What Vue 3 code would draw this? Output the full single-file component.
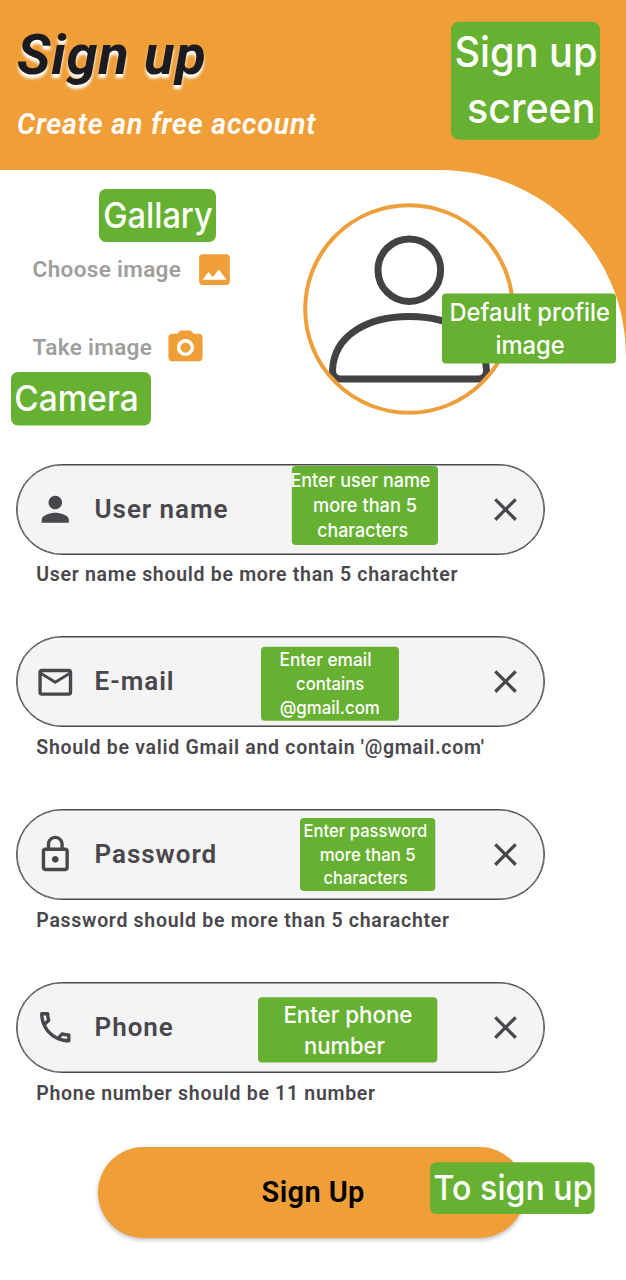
<script setup>
const icons = {
  person: 'M12 12c2.21 0 4-1.79 4-4s-1.79-4-4-4-4 1.79-4 4 1.79 4 4 4zm0 2c-2.67 0-8 1.34-8 4v2h16v-2c0-2.66-5.33-4-8-4z',
  mail: 'M22 6c0-1.1-.9-2-2-2H4c-1.1 0-2 .9-2 2v12c0 1.1.9 2 2 2h16c1.1 0 2-.9 2-2V6zm-2 0-8 5-8-5h16zm0 12H4V8l8 5 8-5v10z',
  lock: 'M18 8h-1V6c0-2.76-2.24-5-5-5S7 3.24 7 6v2H6c-1.1 0-2 .9-2 2v10c0 1.1.9 2 2 2h12c1.1 0 2-.9 2-2V10c0-1.1-.9-2-2-2zM9 6c0-1.66 1.34-3 3-3s3 1.34 3 3v2H9V6zm9 14H6V10h12v10zm-6-3c1.1 0 2-.9 2-2s-.9-2-2-2-2 .9-2 2 .9 2 2 2z',
  phone: 'M6.54 5c.06.89.21 1.76.45 2.59l-1.2 1.2c-.41-1.2-.67-2.47-.76-3.79h1.51m9.86 12.02c.85.24 1.72.39 2.6.45v1.49c-1.32-.09-2.59-.35-3.8-.75l1.2-1.19M7.5 3H4c-.55 0-1 .45-1 1 0 9.39 7.61 17 17 17 .55 0 1-.45 1-1v-3.49c0-.55-.45-1-1-1-1.24 0-2.45-.2-3.57-.57-.1-.04-.21-.05-.31-.05-.26 0-.51.1-.71.29l-2.2 2.2c-2.83-1.45-5.15-3.76-6.59-6.59l2.2-2.2c.28-.28.36-.67.25-1.02C8.7 6.45 8.5 5.25 8.5 4c0-.55-.45-1-1-1z',
}

const fields = [
  { label: 'User name', icon: 'person', helper: 'User name should be more than 5 charachter' },
  { label: 'E-mail', icon: 'mail', helper: "Should be valid Gmail and contain '@gmail.com'" },
  { label: 'Password', icon: 'lock', helper: 'Password should be more than 5 charachter' },
  { label: 'Phone', icon: 'phone', helper: 'Phone number should be 11 number' },
]

// Annotation labels floating over the screen. Each line: [text, x, baseline, width]
const notes = [
  { x: 451, y: 21.7, w: 149, h: 118, r: 8, size: 42, lines: [['Sign up', 454.5, 67, 143], ['screen', 467, 122.5, 128.5]] },
  { x: 99, y: 189, w: 117, h: 53, r: 7, size: 35.5, lines: [['Gallary', 103.2, 227.5, 109.5]] },
  { x: 11, y: 372, w: 140, h: 53.5, r: 7, size: 35.5, lines: [['Camera', 14.2, 410.5, 124.5]] },
  { x: 442, y: 293.5, w: 174, h: 70, r: 4, size: 24.5, lines: [['Default profile', 449.4, 320.5, 160.5], ['image', 495.4, 353.7, 69.3]] },
  { x: 291.8, y: 466, w: 146.2, h: 79, r: 4, size: 18.5, lines: [['Enter user name', 290.4, 487, 140], ['more than 5', 313, 512, 104], ['characters', 317.2, 537.3, 91]] },
  { x: 261, y: 646.7, w: 138, h: 74, r: 4, size: 18, lines: [['Enter email', 279.5, 666.3, 92], ['contains', 296, 690.3, 68.2], ['@gmail.com', 279.8, 713.9, 100]] },
  { x: 300, y: 818, w: 135.3, h: 73, r: 4, size: 17.5, lines: [['Enter password', 303.6, 837, 123.8], ['more than 5', 319.7, 860.7, 96], ['characters', 323.6, 883.8, 84]] },
  { x: 258, y: 997.3, w: 179.3, h: 65.2, r: 4, size: 23.3, lines: [['Enter phone', 283.4, 1022.5, 129], ['number', 304, 1053.7, 81]] },
  { x: 430, y: 1162.3, w: 164.6, h: 51.7, r: 6, size: 34.5, lines: [['To sign up', 433.6, 1200, 159]] },
]
</script>

<template>
  <div class="screen">
    <header class="header">
      <h1 class="title">Sign up</h1>
      <p class="subtitle">Create an free account</p>
    </header>

    <main class="sheet">
      <section class="profile">
        <div class="pickers">
          <div class="picker">
            <span>Choose image</span>
            <svg class="picker-icon gallery" viewBox="0 0 24 24">
              <path d="M21 19V5c0-1.1-.9-2-2-2H5c-1.1 0-2 .9-2 2v14c0 1.1.9 2 2 2h14c1.1 0 2-.9 2-2zM8.5 13.5l2.5 3.01L14.5 12l4.5 6H5l3.5-4.5z" />
            </svg>
          </div>
          <div class="picker">
            <span>Take image</span>
            <svg class="picker-icon camera" viewBox="0 0 24 24">
              <circle cx="12" cy="12" r="3" />
              <path d="M9 2 7.17 4H4c-1.1 0-2 .9-2 2v12c0 1.1.9 2 2 2h16c1.1 0 2-.9 2-2V6c0-1.1-.9-2-2-2h-3.17L15 2H9zm3 15c-2.76 0-5-2.24-5-5s2.24-5 5-5 5 2.24 5 5-2.24 5-5 5z" />
            </svg>
          </div>
        </div>
        <svg class="avatar" viewBox="0 0 212 212">
          <defs>
            <clipPath id="avatar-clip"><circle cx="106" cy="106" r="104" /></clipPath>
          </defs>
          <g class="figure" clip-path="url(#avatar-clip)">
            <circle cx="106.3" cy="67.2" r="31.3" />
            <path d="M29.5 167.2C31 132 65 113.500 106.300 113.500S182 132 183.500 167.200Q183.500 176 175 176H38Q29.500 176 29.500 167.200Z" />
          </g>
          <circle class="ring" cx="106" cy="106" r="103.8" />
        </svg>
      </section>

      <form class="form" @submit.prevent>
        <div v-for="f in fields" :key="f.label" class="field">
          <div class="input">
            <svg class="lead" viewBox="0 0 24 24"><path :d="icons[f.icon]" /></svg>
            <span class="label">{{ f.label }}</span>
            <svg class="clear" viewBox="0 0 24 24">
              <path d="M19 6.41 17.59 5 12 10.59 6.41 5 5 6.41 10.59 12 5 17.59 6.41 19 12 13.41 17.59 19 19 17.59 13.41 12z" />
            </svg>
          </div>
          <p class="helper">{{ f.helper }}</p>
        </div>
        <button class="submit" type="submit">Sign Up</button>
      </form>
    </main>

    <svg class="notes" viewBox="0 0 626 1280">
      <g v-for="(n, i) in notes" :key="i">
        <rect :x="n.x" :y="n.y" :width="n.w" :height="n.h" :rx="n.r" />
        <text
          v-for="l in n.lines"
          :key="l[0]"
          :x="l[1]"
          :y="l[2]"
          :font-size="n.size"
          :textLength="l[3]"
          lengthAdjust="spacingAndGlyphs"
        >{{ l[0] }}</text>
      </g>
    </svg>
  </div>
</template>

<style>
body {
  margin: 0;
}
</style>

<style scoped>
.screen {
  position: relative;
  width: 626px;
  height: 1280px;
  overflow: hidden;
  background: #f09f38;
  font-family: Roboto, "Liberation Sans", sans-serif;
}
.header {
  box-sizing: border-box;
  height: 170px;
  padding: 22px 17px 0;
}
.title {
  margin: 0;
  font-size: 56px;
  line-height: 66px;
  font-weight: 700;
  font-style: italic;
  letter-spacing: 0.8px;
  color: #1c1b1f;
  text-shadow: 0 4px 3px #fff;
}
.subtitle {
  margin: 20px 0 0;
  font-size: 28.5px;
  line-height: 34px;
  font-weight: 600;
  font-style: italic;
  letter-spacing: 0.8px;
  color: #fff;
}
.sheet {
  height: 1110px;
  background: #fff;
  border-top-right-radius: 186px;
}
.profile {
  display: flex;
  box-sizing: border-box;
  height: 293.5px;
  padding: 32.7px 0 0 32.6px;
}
.pickers {
  display: flex;
  flex-direction: column;
  gap: 37px;
  width: 270.6px;
  padding-top: 46px;
}
.picker {
  display: flex;
  align-items: center;
  height: 41px;
  font-size: 22.5px;
  font-weight: 600;
  letter-spacing: 0.35px;
  color: #9e9e9e;
}
.picker-icon {
  width: 41px;
  height: 41px;
  fill: #f09f38;
}
.gallery {
  margin-left: 12.7px;
}
.camera {
  margin-left: 12.7px;
}
.avatar {
  width: 212px;
  height: 212px;
}
.figure {
  fill: none;
  stroke: #424143;
  stroke-width: 7;
}
.ring {
  fill: none;
  stroke: #ed9f3b;
  stroke-width: 4;
}
.form {
  display: flex;
  flex-direction: column;
  padding-left: 16.3px;
}
.field {
  height: 172.9px;
}
.input {
  display: flex;
  align-items: center;
  box-sizing: border-box;
  width: 528.5px;
  height: 91px;
  padding: 0 19px 0 17.5px;
  border: 1px solid #49474c;
  border-radius: 46px;
  background: #f4f4f4;
  box-shadow: inset 0 0 0 0.6px #49474c;
}
.lead {
  width: 40.6px;
  height: 40.6px;
  fill: #49474c;
}
.label {
  flex: 1;
  margin: -1px 0 0 19.2px;
  font-size: 26px;
  line-height: 32px;
  font-weight: 600;
  letter-spacing: 0.95px;
  color: #49474c;
}
.clear {
  width: 39px;
  height: 39px;
  fill: #49474c;
}
.helper {
  margin: 8.4px 0 0 20px;
  font-size: 19.5px;
  line-height: 24px;
  font-weight: 600;
  letter-spacing: 0.7px;
  color: #49474c;
}
.submit {
  width: 427px;
  height: 91px;
  margin: -8.2px 0 0 81.9px;
  padding: 0 0 0 3px;
  border: 0;
  border-radius: 46px;
  background: #f09f38;
  box-shadow: 0 2px 4px rgba(0, 0, 0, 0.25);
  font: 600 29px/34px Roboto, "Liberation Sans", sans-serif;
  letter-spacing: 0.4px;
  color: #000;
}
.notes {
  position: absolute;
  inset: 0;
  width: 626px;
  height: 1280px;
  pointer-events: none;
}
.notes rect {
  fill: #66b132;
}
.notes text {
  fill: #fff;
  font-family: Inter, "Liberation Sans", sans-serif;
  font-weight: 550;
}
</style>
